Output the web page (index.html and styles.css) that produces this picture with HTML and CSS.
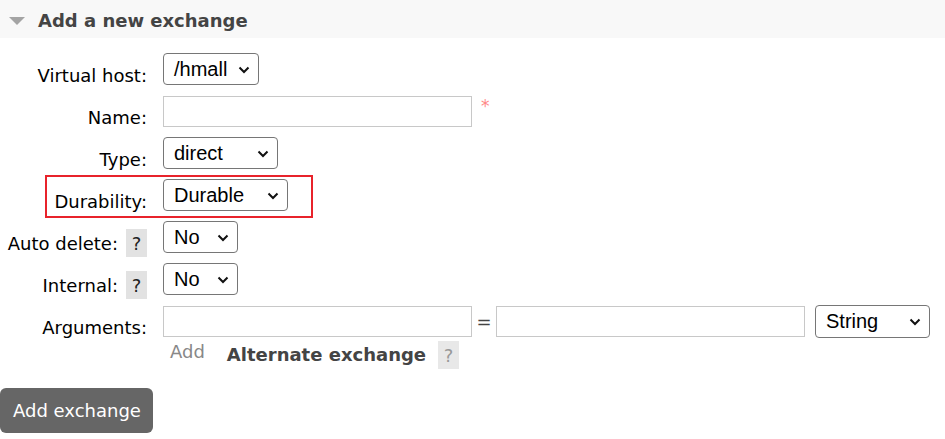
FILE: index.html
```html
<!DOCTYPE html>
<html>
<head>
<meta charset="utf-8">
<link rel="stylesheet" href="styles.css">
</head>
<body>
<div class="section">
  <h2 class="section-head"><span class="tri"></span>Add a new exchange</h2>
  <form class="form">
    <div class="grid">
      <div class="lbl">Virtual host:</div>
      <div class="ctl"><div class="select w-vhost"><span>/hmall</span><svg class="chev" viewBox="0 0 12 8" width="12" height="8"><path d="M1.5 1.5 L6 6 L10.5 1.5" fill="none" stroke="#111" stroke-width="2"/></svg></div></div>

      <div class="lbl">Name:</div>
      <div class="ctl"><div class="input"></div><span class="mand">*</span></div>

      <div class="lbl">Type:</div>
      <div class="ctl"><div class="select w-type"><span>direct</span><svg class="chev" viewBox="0 0 12 8" width="12" height="8"><path d="M1.5 1.5 L6 6 L10.5 1.5" fill="none" stroke="#111" stroke-width="2"/></svg></div></div>

      <div class="lbl">Durability:</div>
      <div class="ctl"><div class="select w-dur"><span>Durable</span><svg class="chev" viewBox="0 0 12 8" width="12" height="8"><path d="M1.5 1.5 L6 6 L10.5 1.5" fill="none" stroke="#111" stroke-width="2"/></svg></div></div>

      <div class="lbl">Auto delete: <span class="help">?</span></div>
      <div class="ctl"><div class="select w-no"><span>No</span><svg class="chev" viewBox="0 0 12 8" width="12" height="8"><path d="M1.5 1.5 L6 6 L10.5 1.5" fill="none" stroke="#111" stroke-width="2"/></svg></div></div>

      <div class="lbl">Internal: <span class="help">?</span></div>
      <div class="ctl"><div class="select w-no"><span>No</span><svg class="chev" viewBox="0 0 12 8" width="12" height="8"><path d="M1.5 1.5 L6 6 L10.5 1.5" fill="none" stroke="#111" stroke-width="2"/></svg></div></div>

      <div class="lbl">Arguments:</div>
      <div class="ctl args">
        <div class="input"></div>
        <span class="eq">=</span>
        <div class="input"></div>
        <div class="select w-str"><span>String</span><svg class="chev" viewBox="0 0 12 8" width="12" height="8"><path d="M1.5 1.5 L6 6 L10.5 1.5" fill="none" stroke="#111" stroke-width="2"/></svg></div>
      </div>

      <div class="lbl empty"></div>
      <div class="ctl extra">
        <span class="add">Add</span>
        <span class="alt">Alternate exchange</span>
        <span class="help help-muted">?</span>
      </div>
    </div>
    <div class="actions"><button type="button" class="btn">Add exchange</button></div>
  </form>
  <div class="highlight"></div>
</div>
</body>
</html>
```

FILE: styles.css
```css
html, body {
  margin: 0;
  padding: 0;
  background: #fff;
}
body {
  font-family: "DejaVu Sans", Verdana, sans-serif;
  font-size: 18px;
  color: #000;
}
.section {
  position: relative;
  width: 945px;
  height: 439px;
  overflow: hidden;
}
.section-head {
  margin: 0;
  height: 38px;
  background: #f8f8f8;
  display: flex;
  align-items: center;
  font-size: 18px;
  font-weight: bold;
  color: #444;
  padding-left: 9px;
  padding-top: 2px;
  box-sizing: border-box;
}
.tri {
  width: 0;
  height: 0;
  border-left: 8px solid transparent;
  border-right: 8px solid transparent;
  border-top: 8px solid #a4a4a4;
  margin-right: 13px;
  margin-top: 1px;
}
.form {
  margin: 0;
  padding-top: 15px;
}
.grid {
  display: grid;
  grid-template-columns: 147px 1fr;
  grid-auto-rows: 32px;
  column-gap: 16px;
  row-gap: 10px;
  align-items: start;
}
.lbl {
  display: flex;
  justify-content: flex-end;
  align-items: center;
  gap: 8px;
  margin-top: 8px;
  height: 28px;
  white-space: nowrap;
  line-height: 21px;
}
.ctl {
  display: flex;
  align-items: center;
  height: 32px;
}
.select {
  box-sizing: border-box;
  height: 32px;
  border: 1px solid #767676;
  border-radius: 4px;
  display: flex;
  align-items: center;
  justify-content: space-between;
  padding: 0 8px 0 10px;
  font-family: "Liberation Sans", Arial, sans-serif;
  font-size: 20px;
  color: #000;
  background: #fff;
  flex-shrink: 0;
}
.chev {
  display: block;
  margin-top: 1px;
}
.w-vhost { width: 96px; }
.w-type { width: 115px; }
.w-dur { width: 125px; }
.w-no { width: 75px; }
.w-str { width: 115px; height: 33px; margin-left: 10px; }
.input {
  box-sizing: border-box;
  width: 309px;
  height: 31px;
  border: 1px solid #c8c8c8;
  background: #fff;
  flex-shrink: 0;
}
.mand {
  color: #f88;
  margin-left: 9px;
  font-size: 17px;
  align-self: flex-start;
  margin-top: 1px;
}
.eq {
  color: #444;
  width: 24px;
  text-align: center;
  font-size: 18px;
}
.help {
  display: inline-flex;
  align-items: center;
  justify-content: center;
  width: 21px;
  height: 28px;
  background: #e2e2e2;
  color: #222;
  font-size: 18px;
}
.help-muted {
  background: #e8e8e8;
  color: #999;
}
.extra {
  align-items: flex-start;
  margin-top: -6px;
}
.add {
  color: #888;
  margin-left: 7px;
  line-height: 21px;
}
.alt {
  font-weight: bold;
  color: #444;
  margin-left: 22px;
  margin-right: 12px;
  padding-top: 3px;
  line-height: 21px;
}
.actions {
  margin-top: 9px;
}
.btn {
  height: 45px;
  padding: 0 12px 0 13px;
  border: none;
  border-radius: 6px;
  background: #666;
  color: #fff;
  font-family: "DejaVu Sans", Verdana, sans-serif;
  font-size: 18px;
  cursor: pointer;
}
.highlight {
  position: absolute;
  left: 45px;
  top: 175px;
  width: 268px;
  height: 43px;
  box-sizing: border-box;
  border: 2px solid #e8232b;
  pointer-events: none;
}
```
